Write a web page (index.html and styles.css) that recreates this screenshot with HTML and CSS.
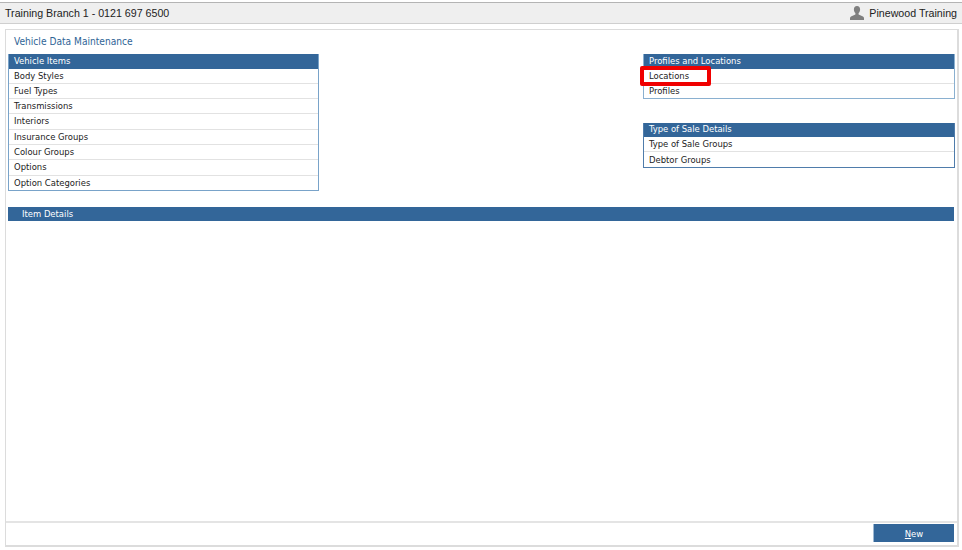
FILE: index.html
```html
<!DOCTYPE html>
<html lang="en">
<head>
<meta charset="utf-8">
<title>Vehicle Data Maintenance</title>
<link rel="stylesheet" href="styles.css">
</head>
<body>
<header class="topbar">
  <span>Training Branch 1 - 0121 697 6500</span>
  <span class="user">
    <svg class="user-icon" width="14" height="14" viewBox="0 0 14 14" aria-hidden="true"><path fill="#7f7f7f" d="M7 0C4.900 0 3.900 1.500 3.900 3.400c0 1.500.6 2.900 1.500 3.700v1.300L1 10.500C.3 10.900 0 11.400 0 12.200V14h14v-1.800c0-.8-.3-1.300-1-1.700L8.600 8.400V7.100c.9-.8 1.500-2.200 1.500-3.700C10.100 1.500 9.100 0 7 0z"/></svg>
    Pinewood Training
  </span>
</header>
<main class="panel">
  <div class="content">
    <h1 class="title">Vehicle Data Maintenance</h1>
    <div class="lists">
      <section class="list list-vehicle">
        <h2 class="list-head">Vehicle Items</h2>
        <ul class="rows">
          <li>Body Styles</li>
          <li>Fuel Types</li>
          <li>Transmissions</li>
          <li>Interiors</li>
          <li>Insurance Groups</li>
          <li>Colour Groups</li>
          <li>Options</li>
          <li>Option Categories</li>
        </ul>
      </section>
      <div class="side">
        <section class="list list-profiles">
          <h2 class="list-head">Profiles and Locations</h2>
          <ul class="rows">
            <li class="marked">Locations<span class="marker"></span></li>
            <li>Profiles</li>
          </ul>
        </section>
        <section class="list list-sale">
          <h2 class="list-head">Type of Sale Details</h2>
          <ul class="rows">
            <li>Type of Sale Groups</li>
            <li>Debtor Groups</li>
          </ul>
        </section>
      </div>
    </div>
    <div class="details">Item Details</div>
  </div>
  <footer class="footer">
    <button class="new-btn" type="button"><u>N</u>ew</button>
  </footer>
</main>
</body>
</html>
```
FILE: styles.css
```css
* { box-sizing: border-box; }
html, body { margin: 0; height: 100%; }
body {
  width: 962px;
  height: 550px;
  overflow: hidden;
  background: #fff;
  padding-top: 2px;
  font-family: "DejaVu Sans Condensed", "DejaVu Sans", sans-serif;
  font-stretch: condensed;
  font-size: 9.4px;
  color: #222;
}
.topbar {
  height: 22px;
  display: flex;
  justify-content: space-between;
  align-items: center;
  padding: 0 5px;
  background: #efefef;
  border-top: 1px solid #b4b4b4;
  border-bottom: 1px solid #cfcfcf;
  font-family: "Liberation Sans", Arial, sans-serif;
  font-stretch: normal;
  font-size: 8pt;
  color: #222;
}
.user { display: flex; align-items: center; gap: 5px; }
.user-icon { display: block; }
.panel {
  margin: 5px 3px 0 5px;
  width: 954px;
  height: 518px;
  border: 1px solid #dcdcdc;
  border-width: 1px 2px 2px 1px;
  display: flex;
  flex-direction: column;
}
.content { flex: 1; padding: 0 3px 0 2px; min-height: 0; }
.title {
  margin: 0;
  height: 24px;
  padding: 5px 0 0 6px;
  font-size: 10.15px;
  line-height: 14px;
  font-weight: 400;
  color: #2f6496;
}
.lists { display: flex; justify-content: space-between; height: 153px; }
.side { width: 312px; margin-right: -1px; display: flex; flex-direction: column; gap: 24px; }
.list { display: flex; flex-direction: column; border: 1px solid #79a3c9; border-top: 0; }
.list-vehicle { width: 311px; height: 137px; }
.list-profiles { height: 45px; border-color: #8ab0d0; }
.list-sale { height: 45px; border-color: #4f7cab; }
.list-head {
  margin: 0;
  height: 14.500px;
  flex: none;
  padding-left: 5px;
  background: #336699;
  color: #fff;
  font-size: inherit;
  font-weight: 400;
  line-height: 13px;
}
.list-sale .list-head { height: 13.500px; line-height: 11px; }
.rows { list-style: none; margin: 0; padding: 0; flex: 1; display: flex; flex-direction: column; }
.rows li {
  flex: 1;
  position: relative;
  padding-left: 5px;
  line-height: 13px;
  border-bottom: 1px solid #e2e2e2;
  white-space: nowrap;
}
.rows li:last-child { border-bottom: 0; }
.list-sale .rows li:last-child { padding-top: 1px; }
.marker {
  position: absolute;
  left: -4px;
  top: -3px;
  width: 71px;
  height: 20px;
  border: 4px solid #f00000;
  border-radius: 2px;
}
.details {
  height: 14px;
  padding-left: 14px;
  background: #336699;
  color: #fff;
  line-height: 13px;
}
.footer {
  flex: none;
  height: 24px;
  border-top: 2px solid #e4e4e4;
  display: flex;
  justify-content: flex-end;
  align-items: flex-start;
  padding: 1px 3px 0 0;
}
.new-btn {
  width: 81px;
  height: 18px;
  padding: 0;
  border: 0;
  border-left: 1px solid #9db8d2;
  background: #336699;
  color: #fff;
  font: inherit;
  line-height: 17px;
}
```
